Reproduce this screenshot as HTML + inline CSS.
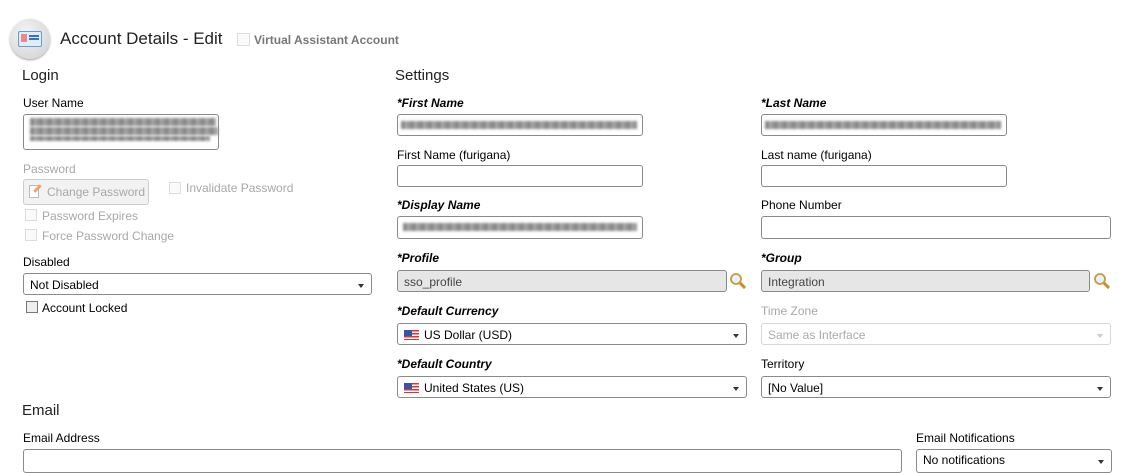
<!DOCTYPE html>
<html><head><style>
*{box-sizing:border-box;margin:0;padding:0}
body{width:1135px;height:465px;overflow:hidden;background:#fff;font-family:"Liberation Sans",sans-serif;font-size:12px;color:#000;position:relative}
.a{position:absolute;white-space:nowrap}
.req{font-weight:bold;font-style:italic}
.h{font-size:15px;color:#222}
.in{position:absolute;height:23px;border:1px solid #8a8a8a;border-radius:3px;background:#fff;padding:4px 6px;font-size:12px}
.gr{background:#e6e6e6;color:#444}
.sel:after{content:"";position:absolute;right:7px;top:10px;border-left:3px solid transparent;border-right:3px solid transparent;border-top:4px solid #333}
.dis{border-color:#d8d8d8;color:#aaa}
.dis:after{border-top-color:#ccc}
.cb{position:absolute;width:12px;height:12px;border:1px solid #ddd;background:#fafafa}
.blur{position:absolute;height:8px;background:repeating-linear-gradient(90deg,#888 0 4px,#aaa 4px 6px,#999 6px 9px);filter:blur(1.3px)}
.flag{display:inline-block;width:15px;height:10px;vertical-align:-1px;margin-right:5px;background:repeating-linear-gradient(#d33 0 1.5px,#fff 1.5px 3px);position:relative}
.flag:before{content:"";position:absolute;left:0;top:0;width:8px;height:6px;background:#3556a8}
.mag{position:absolute;width:17px;height:17px}
.g{color:#a8a8a8}
</style></head><body>
<div class="a" style="left:10px;top:19px;width:40px;height:40px;border-radius:50%;background:radial-gradient(circle at 40% 35%,#f4f4f4,#cfcfcf);box-shadow:0 1px 2px #999"></div>
<div class="a" style="left:18px;top:31px;width:24px;height:16px;background:#dfeefb;border:1px solid #6a9ad0;border-radius:2px"></div>
<div class="a" style="left:21px;top:34px;width:6px;height:8px;background:#e88"></div>
<div class="a" style="left:29px;top:35px;width:10px;height:2px;background:#3a70c0;box-shadow:0 3px 0 #3a70c0"></div>
<div class="a" style="left:60px;top:29px;font-size:17px;color:#222">Account Details - Edit</div>
<div class="cb" style="left:237px;top:33px;width:13px;height:13px"></div>
<div class="a" style="left:254px;top:33px;font-weight:bold;color:#777;font-size:12px">Virtual Assistant Account</div>

<div class="a h" style="left:22px;top:67px">Login</div>
<div class="a h" style="left:395px;top:67px">Settings</div>
<div class="a h" style="left:22px;top:402px">Email</div>

<div class="a" style="left:23px;top:96px">User Name</div>
<div class="in" style="left:23px;top:114px;width:196px;height:36px"></div>
<div class="blur" style="left:30px;top:118px;width:186px"></div>
<div class="blur" style="left:30px;top:127px;width:188px"></div>
<div class="blur" style="left:30px;top:136px;width:180px;height:5px"></div>
<div class="a g" style="left:23px;top:162px">Password</div>
<div class="a" style="left:23px;top:179px;width:126px;height:26px;border:1px solid #ccc;border-radius:3px;background:#f2f2f2"></div>
<div class="a" style="left:29px;top:185px;width:10px;height:13px;border:1px solid #bbb;background:#fff"></div>
<div class="a" style="left:33px;top:187px;width:9px;height:3px;background:#f2a070;transform:rotate(-45deg)"></div>
<div class="a g" style="left:47px;top:185px">Change Password</div>
<div class="cb" style="left:169px;top:182px"></div>
<div class="a g" style="left:186px;top:181px">Invalidate Password</div>
<div class="cb" style="left:25px;top:209px"></div>
<div class="a g" style="left:42px;top:209px">Password Expires</div>
<div class="cb" style="left:25px;top:229px"></div>
<div class="a g" style="left:42px;top:229px">Force Password Change</div>
<div class="a" style="left:23px;top:255px">Disabled</div>
<div class="in sel" style="left:23px;top:273px;width:349px;height:22px;padding-top:4px">Not Disabled</div>
<div class="cb" style="left:26px;top:301px;border-color:#777;background:#eee"></div>
<div class="a" style="left:42px;top:301px">Account Locked</div>

<div class="a req" style="left:397px;top:96px">*First Name</div>
<div class="in" style="left:397px;top:114px;width:246px;height:22px"></div>
<div class="blur" style="left:401px;top:121px;width:236px"></div>
<div class="a req" style="left:761px;top:96px">*Last Name</div>
<div class="in" style="left:761px;top:114px;width:246px;height:22px"></div>
<div class="blur" style="left:765px;top:121px;width:236px"></div>

<div class="a" style="left:397px;top:148px">First Name (furigana)</div>
<div class="in" style="left:397px;top:165px;width:246px;height:22px"></div>
<div class="a" style="left:761px;top:148px">Last name (furigana)</div>
<div class="in" style="left:761px;top:165px;width:246px;height:22px"></div>

<div class="a req" style="left:397px;top:198px">*Display Name</div>
<div class="in" style="left:397px;top:216px;width:246px;height:23px"></div>
<div class="blur" style="left:403px;top:223px;width:234px"></div>
<div class="a" style="left:761px;top:198px">Phone Number</div>
<div class="in" style="left:761px;top:216px;width:350px;height:23px"></div>

<div class="a req" style="left:397px;top:251px">*Profile</div>
<div class="in gr" style="left:397px;top:270px;width:330px;height:22px">sso_profile</div>
<svg class="mag" style="left:729px;top:272px" viewBox="0 0 17 17"><circle cx="7" cy="7" r="5" fill="#e8f2fb" stroke="#c99a3a" stroke-width="1.8"/><path d="M11 11l5 5" stroke="#d08a20" stroke-width="3"/></svg>
<div class="a req" style="left:761px;top:251px">*Group</div>
<div class="in gr" style="left:761px;top:270px;width:329px;height:22px">Integration</div>
<svg class="mag" style="left:1093px;top:272px" viewBox="0 0 17 17"><circle cx="7" cy="7" r="5" fill="#e8f2fb" stroke="#c99a3a" stroke-width="1.8"/><path d="M11 11l5 5" stroke="#d08a20" stroke-width="3"/></svg>

<div class="a req" style="left:397px;top:304px">*Default Currency</div>
<div class="in sel" style="left:397px;top:323px;width:350px;height:22px"><span class="flag"></span>US Dollar (USD)</div>
<div class="a g" style="left:761px;top:304px">Time Zone</div>
<div class="in sel dis" style="left:761px;top:323px;width:350px;height:22px">Same as Interface</div>

<div class="a req" style="left:397px;top:357px">*Default Country</div>
<div class="in sel" style="left:397px;top:376px;width:350px;height:22px"><span class="flag"></span>United States (US)</div>
<div class="a" style="left:761px;top:357px">Territory</div>
<div class="in sel" style="left:761px;top:376px;width:350px;height:22px">[No Value]</div>

<div class="a" style="left:23px;top:431px">Email Address</div>
<div class="in" style="left:23px;top:449px;width:879px;height:24px"></div>
<div class="a" style="left:916px;top:431px">Email Notifications</div>
<div class="in sel" style="left:916px;top:449px;width:196px;height:24px;padding-top:3px">No notifications</div>
</body></html>
